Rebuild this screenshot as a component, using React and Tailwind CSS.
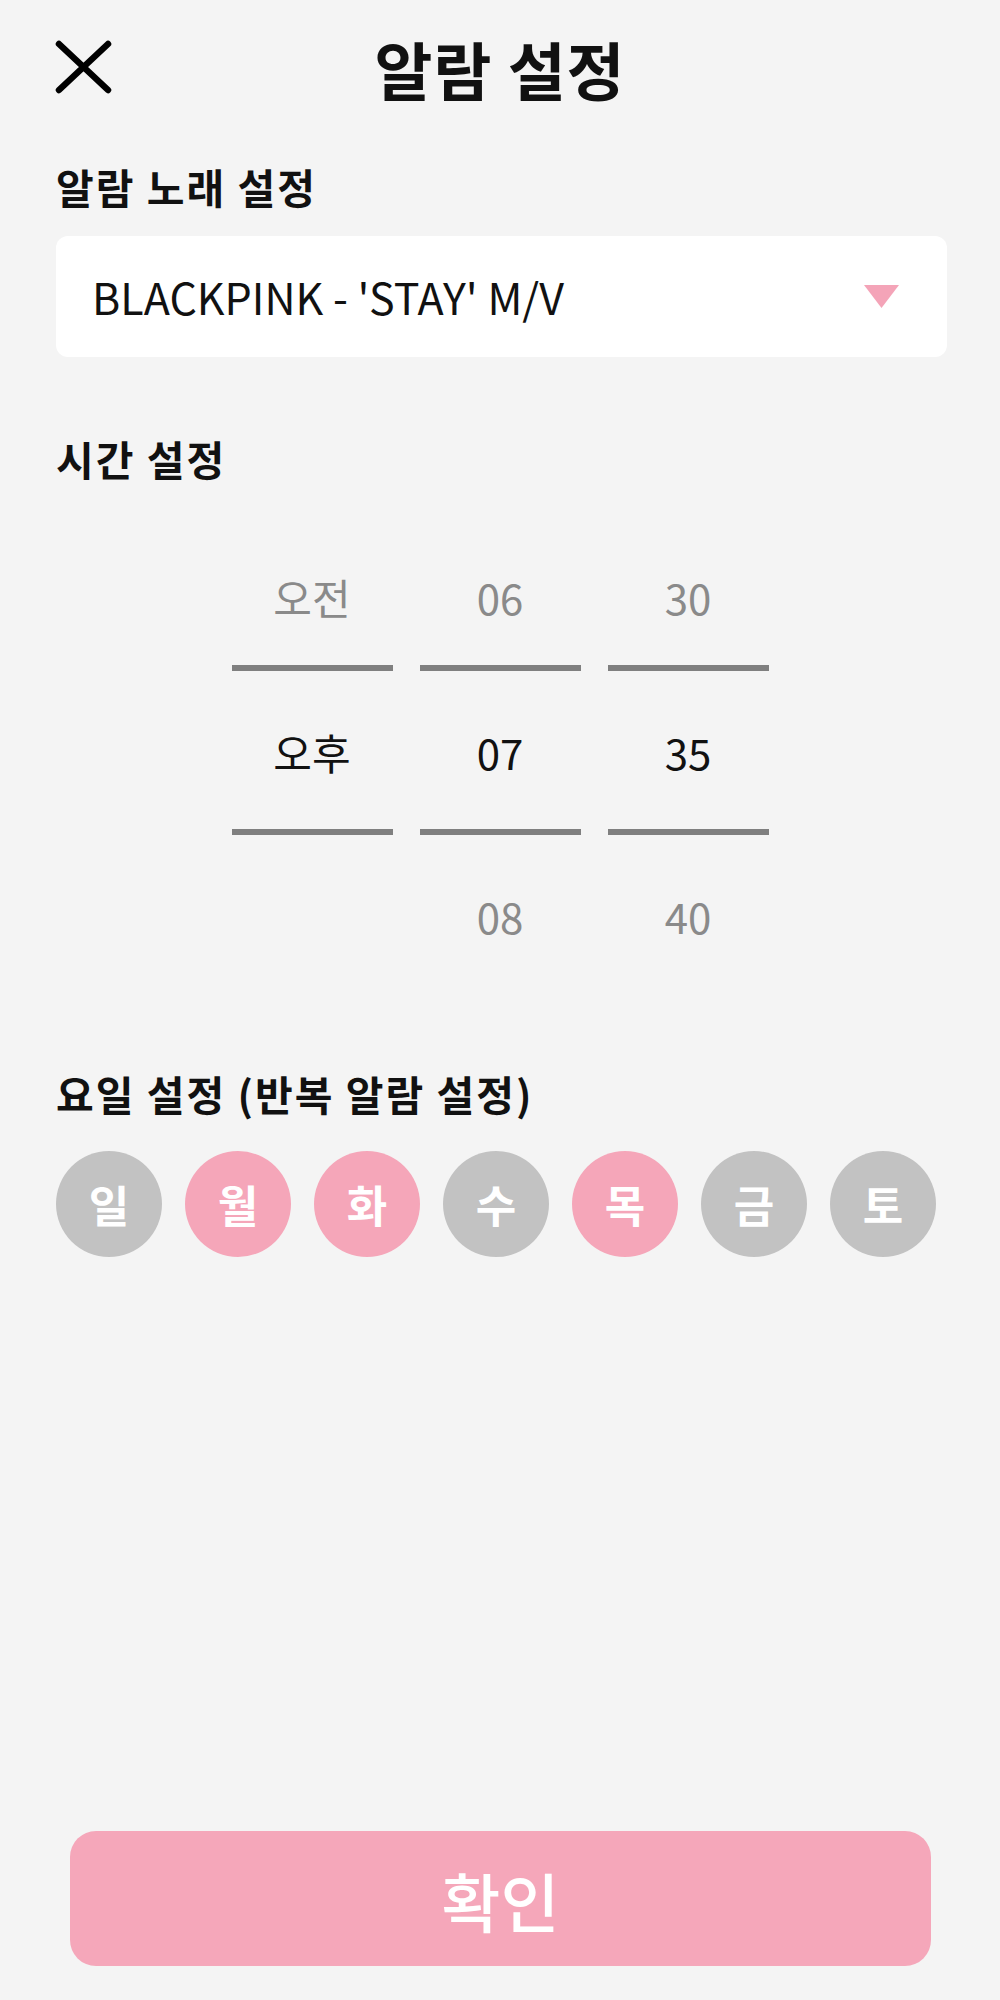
import React from "react";

const days = [
  { d: "일", on: false },
  { d: "월", on: true },
  { d: "화", on: true },
  { d: "수", on: false },
  { d: "목", on: true },
  { d: "금", on: false },
  { d: "토", on: false },
];

function Column({ top, mid, bottom }) {
  return (
    <div className="flex w-[161px] flex-col items-stretch">
      <div className="flex h-[60px] items-center justify-center text-[42px] leading-none text-[#8a8a8a]">{top}</div>
      <div className="mt-[38px] h-[6px] bg-[#7f7f7f]" />
      <div className="mt-[51px] flex h-[60px] items-center justify-center text-[42px] leading-none text-[#111]">{mid}</div>
      <div className="mt-[47px] h-[6px] bg-[#7f7f7f]" />
      <div className="mt-[51px] flex h-[60px] items-center justify-center text-[42px] leading-none text-[#8a8a8a]">{bottom}</div>
    </div>
  );
}

export default function App() {
  return (
    <div
      className="flex h-[2000px] w-full flex-col bg-[#f4f4f4] text-[#111]"
      style={{ fontFamily: '"Noto Sans CJK KR", "Noto Sans", sans-serif' }}
    >
      {/* Header */}
      <div className="grid h-[134px] grid-cols-[1fr_auto_1fr] items-center">
        <div className="pl-[55px]">
          <svg width="58" height="54" viewBox="0 0 58 54" fill="none">
            <path d="M4 4 L53 50 M53 4 L4 50" stroke="#000" strokeWidth="6.5" strokeLinecap="round" />
          </svg>
        </div>
        <h1 className="text-[63px] font-bold leading-none tracking-[1px]">알람 설정</h1>
        <div />
      </div>

      <div className="flex flex-col pl-[56px] pr-[53px]">
        <div className="mt-[32px] text-[41px] font-bold leading-none tracking-[2px]">알람 노래 설정</div>

        <div className="mt-[29px] flex h-[121px] items-center justify-between rounded-[12px] bg-white pl-[36px] pr-[48px]">
          <span className="text-[43px] leading-none text-[#111]">BLACKPINK - 'STAY' M/V</span>
          <svg width="35" height="23" viewBox="0 0 35 23">
            <path d="M0 0 H35 L17.5 23 Z" fill="#f4a4b8" />
          </svg>
        </div>

        <div className="mt-[81px] text-[41px] font-bold leading-none tracking-[2px]">시간 설정</div>

        <div className="mt-[88px] flex justify-center gap-[27px] pr-[3px]">
          <Column top="오전" mid="오후" bottom="" />
          <Column top="06" mid="07" bottom="08" />
          <Column top="30" mid="35" bottom="40" />
        </div>

        <div className="mt-[127px] text-[41px] font-bold leading-none tracking-[2px]">요일 설정 (반복 알람 설정)</div>

        <div className="mt-[37px] flex gap-[23px]">
          {days.map((x) => (
            <div
              key={x.d}
              className={
                "flex h-[106px] w-[106px] items-center justify-center rounded-full text-[44px] font-bold leading-none text-white " +
                (x.on ? "bg-[#f5a6b9]" : "bg-[#c2c2c2]")
              }
            >
              {x.d}
            </div>
          ))}
        </div>
      </div>

      <div className="flex-1" />

      <div className="mb-[34px] ml-[70px] mr-[69px] flex h-[135px] items-center justify-center rounded-[26px] bg-[#f5a7ba] text-[64px] font-medium leading-none text-white">
        확인
      </div>
    </div>
  );
}
